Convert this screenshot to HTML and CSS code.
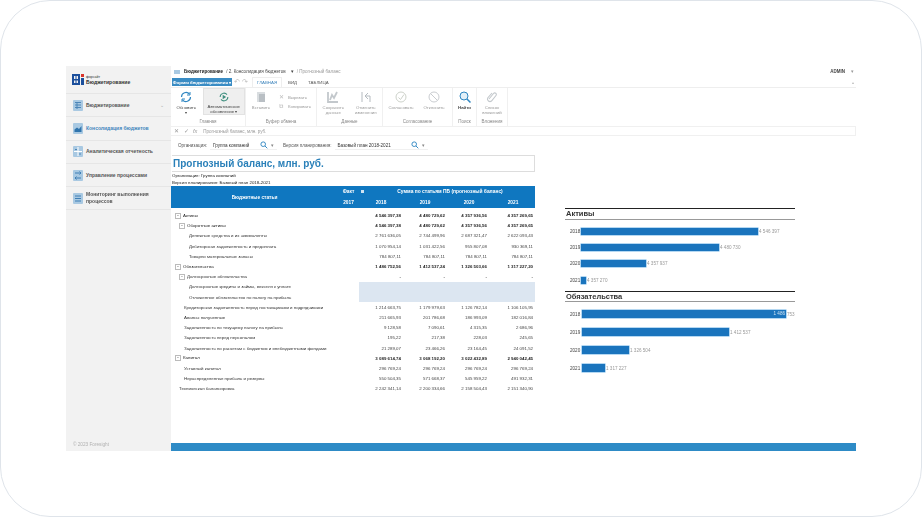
FILE: index.html
```html
<!DOCTYPE html>
<html lang="ru">

<head>
    <meta charset="UTF-8" />
    <title>Консолидация бюджетов</title>
    <link rel="stylesheet" href="styles.css">
</head>

<body>
    <div class="frame">
        <div class="app">
            <div class="sidebar">
                <div class="logo">
                    <svg width="13" height="13" viewBox="0 0 13 13">
                        <path d="M0 1h8v11H0zM2 3v3h1.500V3zM4.500 3v3H6V3zM2 7.500V10h1.500V7.500zM4.500 7.500V10H6V7.500z" fill="#1b4f9c" fill-rule="evenodd" />
                        <path d="M9 1h3v3H9z" fill="#d9342b" />
                        <path d="M9 5h3v7H9z" fill="#1b4f9c" />
                    </svg>
                    <div>
                        <div class="logo-small">форсайт</div>
                        <div class="logo-name">Бюджетирование</div>
                    </div>
                </div>
                <div class="nav">
                    <a class="nav-item">
                        <span class="nav-icon"><svg viewBox="0 0 10 11"><path d="M2 2.500h6M2 5h6M2 7.500h6M4 2v7" stroke="#4d86b8" stroke-width="1" fill="none" /></svg></span>
                        Бюджетирование
                        <span class="nav-arrow">⌄</span>
                    </a>
                    <a class="nav-item active">
                        <span class="nav-icon"><svg viewBox="0 0 10 11"><path d="M1.500 9V6.500L4 4.500l2 1.500 2.500-3V9z" fill="#2f74ad" /></svg></span>
                        Консолидация бюджетов
                    </a>
                    <a class="nav-item">
                        <span class="nav-icon"><svg viewBox="0 0 10 11"><path d="M1 5.500h8M5 1v9" stroke="#fff" stroke-width="1" /><path d="M2 3.500h2M6 8h2" stroke="#4d86b8" stroke-width="1" /></svg></span>
                        Аналитическая отчетность
                    </a>
                    <a class="nav-item">
                        <span class="nav-icon"><svg viewBox="0 0 10 11"><path d="M2 3h6M2 8h6M6.500 4.500L8 3 6.500 1.500M3.500 6.500L2 8l1.500 1.500" stroke="#3f7fb5" stroke-width="1" fill="none" /></svg></span>
                        Управление процессами
                    </a>
                    <a class="nav-item">
                        <span class="nav-icon"><svg viewBox="0 0 10 11"><path d="M2 3h6M2 5.500h6M2 8h6" stroke="#3f7fb5" stroke-width="1" /></svg></span>
                        <span>Мониторинг выполнения<br>процессов</span>
                    </a>
                </div>
                <div class="copyright">© 2023 Foresight</div>
            </div>

            <div class="main">
                <div class="crumbs">
                    <span class="crumb-icon"></span>
                    <b>Бюджетирование</b>
                    <span>/ 2. Консолидация бюджетов</span>
                    <span class="crumb-caret">▾</span>
                    <span class="crumb-last">/ Прогнозный баланс</span>
                    <span class="admin">ADMIN</span>
                    <span class="admin-caret">▾</span>
                </div>

                <div class="tabs">
                    <button class="forms-btn">Формы бюджетирования ▾</button>
                    <span class="undo">↶ ↷</span>
                    <span class="tab current">ГЛАВНАЯ</span>
                    <span class="tab">ВИД</span>
                    <span class="tab">ТАБЛИЦА</span>
                    <span class="tabs-end">▴</span>
                </div>

                <div class="ribbon">
                    <div class="group group-main">
                        <div class="tools">
                            <div class="tool tool-refresh">
                                <svg class="icon" viewBox="0 0 14 14"><path d="M2.500 7a4.500 4.500 0 0 1 8-2.800M11.500 7a4.500 4.500 0 0 1-8 2.800" fill="none" stroke="#2f86c1" stroke-width="1.200" /><path d="M11 2v3H8M3 12V9h3" fill="none" stroke="#2f86c1" stroke-width="1" /></svg>
                                <span>Обновить<br>▾</span>
                            </div>
                            <div class="tool tool-auto">
                                <svg class="icon" viewBox="0 0 14 14"><path d="M2.500 7a4.500 4.500 0 0 1 8-2.800M11.500 7a4.500 4.500 0 0 1-8 2.800" fill="none" stroke="#3f8f7f" stroke-width="1.200" /><path d="M5.500 4.500l4 2.500-4 2.500z" fill="#3f8f7f" /></svg>
                                <span>Автоматическое<br>обновление ▾</span>
                            </div>
                        </div>
                        <div class="group-name">Главная</div>
                    </div>
                    <div class="group group-clip">
                        <div class="tools">
                            <div class="tool tool-paste">
                                <svg class="icon" viewBox="0 0 14 14"><path d="M3 2h8v10H3z" fill="#d9dde0" /><path d="M5 4h6v8H5z" fill="#b9bfc4" /></svg>
                                <span>Вставить</span>
                            </div>
                            <div class="clip-list">
                                <div><i>✕</i>Вырезать</div>
                                <div><i>⧉</i>Копировать</div>
                            </div>
                        </div>
                        <div class="group-name">Буфер обмена</div>
                    </div>
                    <div class="group group-data">
                        <div class="tools">
                            <div class="tool tool-wide">
                                <svg class="icon" viewBox="0 0 14 14"><path d="M2 2v10h10M4 10l2-5 2 3 3-6" fill="none" stroke="#c3c8cc" stroke-width="1.800" /></svg>
                                <span>Сохранить<br>данные</span>
                            </div>
                            <div class="tool tool-wide">
                                <svg class="icon" viewBox="0 0 14 14"><path d="M3 2v10" stroke="#b5bbc0" stroke-width="1" /><path d="M6 6l3-3 0 0M6 6l3 3M6 6h5v6" fill="none" stroke="#b5bbc0" stroke-width="1" /></svg>
                                <span>Отменить<br>изменения</span>
                            </div>
                        </div>
                        <div class="group-name">Данные</div>
                    </div>
                    <div class="group group-agree">
                        <div class="tools">
                            <div class="tool tool-wide">
                                <svg class="icon" viewBox="0 0 14 14"><circle cx="7" cy="7" r="5" fill="none" stroke="#ccd1c9" stroke-width="1" /><path d="M4.500 7.500L6.500 9.500 10 4.500" fill="none" stroke="#ccd1c9" stroke-width="1" /></svg>
                                <span>Согласовать</span>
                            </div>
                            <div class="tool tool-wide">
                                <svg class="icon" viewBox="0 0 14 14"><circle cx="7" cy="7" r="5" fill="none" stroke="#c9ccd0" stroke-width="1" /><path d="M3.500 3.500l7 7" stroke="#c9ccd0" stroke-width="1" /></svg>
                                <span>Отклонить</span>
                            </div>
                        </div>
                        <div class="group-name">Согласование</div>
                    </div>
                    <div class="group group-find">
                        <div class="tools">
                            <div class="tool tool-find">
                                <svg class="icon" viewBox="0 0 14 14"><circle cx="6" cy="6" r="4" fill="#e3f0f8" stroke="#2f86c1" stroke-width="1" /><path d="M9 9l3.500 3.500" stroke="#2f86c1" stroke-width="1.500" /></svg>
                                <span>Найти</span>
                            </div>
                        </div>
                        <div class="group-name">Поиск</div>
                    </div>
                    <div class="group group-files">
                        <div class="tools">
                            <div class="tool">
                                <svg class="icon" viewBox="0 0 14 14"><path d="M4 9l4.500-5.500a1.600 1.600 0 0 1 2.500 2L6.500 11a2.500 2.500 0 0 1-3.800-3L7 3" fill="none" stroke="#c3c8cc" stroke-width="1.100" /></svg>
                                <span>Список<br>вложений</span>
                            </div>
                        </div>
                        <div class="group-name">Вложения</div>
                    </div>
                </div>

                <div class="formula">
                    <span class="formula-icons">✕ ✓ <i>fx</i></span>
                    <span>Прогнозный баланс, млн. руб.</span>
                </div>

                <div class="filters">
                    <label>Организация:</label>
                    <div class="picker picker-org">
                        <span>Группа компаний</span>
                        <svg class="picker-search" viewBox="0 0 8 8"><circle cx="3.200" cy="3.200" r="2.300" fill="none" stroke="#3a8cc4" stroke-width="1" /><path d="M5 5l2.300 2.300" stroke="#3a8cc4" stroke-width="1" /></svg>
                        <span class="picker-arrow">▾</span>
                    </div>
                    <label>Версия планирования:</label>
                    <div class="picker picker-ver">
                        <span>Базовый план 2018-2021</span>
                        <svg class="picker-search" viewBox="0 0 8 8"><circle cx="3.200" cy="3.200" r="2.300" fill="none" stroke="#3a8cc4" stroke-width="1" /><path d="M5 5l2.300 2.300" stroke="#3a8cc4" stroke-width="1" /></svg>
                        <span class="picker-arrow">▾</span>
                    </div>
                </div>

                <div class="content">
                    <div class="report">
                        <div class="report-title">Прогнозный баланс, млн. руб.</div>
                        <div class="report-note">Организация: Группа компаний</div>
                        <div class="report-note">Версия планирования: Базовый план 2018-2021</div>

                        <table class="grid">
                            <colgroup>
                                <col class="col-name">
                                <col class="col-fact">
                                <col class="col-num">
                                <col class="col-num">
                                <col class="col-num">
                                <col class="col-num">
                            </colgroup>
                            <thead>
                                <tr>
                                    <th rowspan="2" class="th-name">Бюджетные статьи</th>
                                    <th>Факт</th>
                                    <th colspan="4" class="th-sum"><span class="th-mark"></span>Сумма по статьям ПБ (прогнозный баланс)</th>
                                </tr>
                                <tr>
                                    <th>2017</th>
                                    <th>2018</th>
                                    <th>2019</th>
                                    <th>2020</th>
                                    <th>2021</th>
                                </tr>
                            </thead>
                            <tbody>
                                <tr class="bold">
                                    <td class="lvl0"><span class="tree">−</span><span class="plain">Активы</span></td><td></td>
                                    <td>4 546 397,38</td><td>4 480 729,62</td><td>4 357 936,56</td><td>4 357 269,65</td>
                                </tr>
                                <tr class="bold">
                                    <td class="lvl1"><span class="tree">−</span><span class="plain">Оборотные активы</span></td><td></td>
                                    <td>4 546 397,38</td><td>4 480 729,62</td><td>4 357 936,56</td><td>4 357 269,65</td>
                                </tr>
                                <tr>
                                    <td class="lvl2">Денежные средства и их эквиваленты</td><td></td>
                                    <td>2 761 636,05</td><td>2 744 499,96</td><td>2 687 321,47</td><td>2 622 093,43</td>
                                </tr>
                                <tr>
                                    <td class="lvl2">Дебиторская задолженность и предоплата</td><td></td>
                                    <td>1 070 954,14</td><td>1 031 422,56</td><td>955 807,08</td><td>930 369,11</td>
                                </tr>
                                <tr>
                                    <td class="lvl2">Товарно материальные запасы</td><td></td>
                                    <td>784 807,11</td><td>784 807,11</td><td>784 807,11</td><td>784 807,11</td>
                                </tr>
                                <tr class="bold">
                                    <td class="lvl0"><span class="tree">−</span><span class="plain">Обязательства</span></td><td></td>
                                    <td>1 486 752,56</td><td>1 412 537,24</td><td>1 326 503,66</td><td>1 317 227,20</td>
                                </tr>
                                <tr>
                                    <td class="lvl1"><span class="tree">−</span>Долгосрочные обязательства</td><td></td>
                                    <td>-</td><td>-</td><td>-</td><td>-</td>
                                </tr>
                                <tr class="empty">
                                    <td class="lvl2">Долгосрочные кредиты и займы, векселя к уплате</td><td></td>
                                    <td></td><td></td><td></td><td></td>
                                </tr>
                                <tr class="empty">
                                    <td class="lvl2">Отложенное обязательство по налогу на прибыль</td><td></td>
                                    <td></td><td></td><td></td><td></td>
                                </tr>
                                <tr>
                                    <td class="lvl3">Кредиторская задолженность перед поставщиками и подрядчиками</td><td></td>
                                    <td>1 214 663,75</td><td>1 179 979,63</td><td>1 126 782,14</td><td>1 106 105,95</td>
                                </tr>
                                <tr>
                                    <td class="lvl3">Авансы полученные</td><td></td>
                                    <td>211 665,93</td><td>201 786,68</td><td>186 993,09</td><td>182 016,84</td>
                                </tr>
                                <tr>
                                    <td class="lvl3">Задолженность по текущему налогу на прибыль</td><td></td>
                                    <td>9 128,58</td><td>7 090,61</td><td>4 315,35</td><td>2 686,96</td>
                                </tr>
                                <tr>
                                    <td class="lvl3">Задолженность перед персоналом</td><td></td>
                                    <td>195,22</td><td>217,38</td><td>228,03</td><td>245,65</td>
                                </tr>
                                <tr>
                                    <td class="lvl3">Задолженность по расчетам с бюджетом и внебюджетными фондами</td><td></td>
                                    <td>21 289,07</td><td>23 466,26</td><td>23 164,45</td><td>24 091,52</td>
                                </tr>
                                <tr class="bold">
                                    <td class="lvl0"><span class="tree">−</span><span class="plain">Капитал</span></td><td></td>
                                    <td>3 089 614,74</td><td>3 068 192,20</td><td>3 022 432,89</td><td>2 940 042,45</td>
                                </tr>
                                <tr>
                                    <td class="lvl3">Уставный капитал</td><td></td>
                                    <td>296 769,24</td><td>296 769,24</td><td>296 769,24</td><td>296 769,24</td>
                                </tr>
                                <tr>
                                    <td class="lvl3">Нераспределенная прибыль и резервы</td><td></td>
                                    <td>550 504,35</td><td>571 668,37</td><td>545 959,22</td><td>491 932,31</td>
                                </tr>
                                <tr>
                                    <td class="lvl1">Техническая балансировка</td><td></td>
                                    <td>2 242 341,14</td><td>2 200 334,66</td><td>2 158 504,43</td><td>2 151 340,90</td>
                                </tr>
                            </tbody>
                        </table>
                    </div>

                    <div class="charts">
                        <div class="chart chart-assets">
                            <h3>Активы</h3>
                            <div class="chart-body">
                                <div class="bar-row"><span>2018</span><div class="bar" style="width: 177px"></div><em>4 546 397</em></div>
                                <div class="bar-row"><span>2019</span><div class="bar" style="width: 138px"></div><em>4 480 730</em></div>
                                <div class="bar-row"><span>2020</span><div class="bar" style="width: 65px"></div><em>4 357 937</em></div>
                                <div class="bar-row"><span>2021</span><div class="bar" style="width: 5px"></div><em>4 357 270</em></div>
                            </div>
                        </div>
                        <div class="chart chart-debts">
                            <h3>Обязательства</h3>
                            <div class="chart-body">
                                <div class="bar-row"><span>2018</span><div class="bar" style="width: 204px"><b>1 486</b></div><em>753</em></div>
                                <div class="bar-row"><span>2019</span><div class="bar" style="width: 147px"></div><em>1 412 537</em></div>
                                <div class="bar-row"><span>2020</span><div class="bar" style="width: 47px"></div><em>1 326 504</em></div>
                                <div class="bar-row"><span>2021</span><div class="bar" style="width: 23px"></div><em>1 317 227</em></div>
                            </div>
                        </div>
                    </div>
                </div>

                <div class="bottom-bar"></div>
            </div>
        </div>
    </div>
</body>

</html>
```
FILE: styles.css
```css
html,
body {
    margin: 0;
    background: #fff;
}

body {
    font-family: 'Liberation Sans', Arial, sans-serif;
    color: #333;
}

.frame {
    width: 922px;
    height: 517px;
    box-sizing: border-box;
    border: 1px solid #dfe4ea;
    border-radius: 50px;
    padding: 65px 65px 0;
    overflow: hidden;
}

.app {
    width: 790px;
    height: 385px;
    display: flex;
    filter: blur(0.3px);
}

/* sidebar */
.sidebar {
    width: 105px;
    background-color: #f2f2f2;
    display: flex;
    flex-direction: column;
    flex-shrink: 0;
}

.logo {
    height: 27px;
    display: flex;
    align-items: center;
    gap: 1px;
    padding-left: 6px;
}

.logo-small {
    font-size: 3.500px;
    line-height: 4px;
}

.logo-name {
    font-size: 5.100px;
    font-weight: bold;
    line-height: 6px;
    color: #333;
}

.nav-item {
    height: 22.300px;
    display: flex;
    align-items: center;
    gap: 3px;
    padding-left: 7px;
    font-size: 5px;
    line-height: 7px;
    font-weight: bold;
    color: #555;
    border-top: 1px solid #e6e6e6;
}

.nav-item:last-child {
    border-bottom: 1px solid #e6e6e6;
}

.nav-item.active {
    color: #3f86bd;
}

.nav-icon {
    width: 10px;
    height: 11px;
    background-color: #a9c9e2;
    border-radius: 1px;
    flex-shrink: 0;
}

.nav-icon svg {
    display: block;
    width: 10px;
    height: 11px;
}

.nav-arrow {
    margin-left: auto;
    margin-right: 7px;
    color: #aaa;
    font-weight: normal;
    line-height: 4px;
}

.copyright {
    margin-top: auto;
    padding: 0 0 4px 7px;
    font-size: 4.700px;
    color: #b0b0b0;
}

/* main */
.main {
    flex: 1;
    min-width: 0;
    display: flex;
    flex-direction: column;
}

.crumbs {
    height: 11px;
    display: flex;
    align-items: center;
    gap: 3px;
    font-size: 4.500px;
    color: #444;
}

.crumbs b {
    color: #222;
}

.crumb-icon {
    width: 6px;
    height: 4px;
    margin-left: 3px;
    margin-right: 1px;
    background-color: #a9c9e2;
}

.crumb-caret {
    margin-left: 2px;
}

.crumb-last {
    color: #999;
}

.admin {
    margin-left: auto;
    font-weight: bold;
}

.admin-caret {
    margin-left: 3px;
    margin-right: 2px;
    color: #999;
}

.tabs {
    height: 10px;
    display: flex;
    align-items: center;
    font-size: 4.400px;
    color: #555;
}

.forms-btn {
    width: 60px;
    height: 8px;
    margin-left: 1px;
    padding: 0;
    border: none;
    font-family: inherit;
    font-size: 4.400px;
    font-weight: bold;
    white-space: nowrap;
    color: #fff;
    background-color: #3a8cc4;
}

.undo {
    width: 20px;
    padding-left: 2px;
    box-sizing: border-box;
    color: #bbb;
    font-size: 7px;
}

.tab {
    margin-right: 11px;
    line-height: 9px;
}

.tab.current {
    width: 22px;
    padding-left: 4px;
    padding-right: 2px;
    margin-right: 6px;
    color: #3f86bd;
    background: #fff;
    border: 1px solid #eee;
    border-bottom: none;
}

.tabs-end {
    margin-left: auto;
    margin-right: 2px;
    color: #bbb;
}

.ribbon {
    height: 39px;
    display: flex;
    border-top: 1px solid #eee;
    box-sizing: border-box;
}

.group {
    display: flex;
    flex-direction: column;
    border-right: 1px solid #f0f0f0;
    box-sizing: border-box;
}

.group-main {
    width: 75px;
}

.group-clip {
    width: 71px;
}

.group-data {
    width: 66px;
}

.group-agree {
    width: 70px;
}

.group-find {
    width: 24px;
}

.group-files {
    width: 31px;
}

.tools {
    flex: 1;
    display: flex;
    justify-content: center;
}

.group-name {
    height: 9px;
    line-height: 9px;
    font-size: 4.500px;
    color: #888;
    text-align: center;
}

.tool {
    width: 31px;
    padding-top: 2px;
    display: flex;
    flex-direction: column;
    align-items: center;
    font-size: 4.300px;
    line-height: 5px;
    text-align: center;
    color: #999;
}

.icon {
    width: 14px;
    height: 14px;
    margin-bottom: 1px;
}

.tool-refresh {
    color: #444;
}

.tool-auto {
    width: 43px;
    height: 27px;
    margin-left: 1px;
    box-sizing: border-box;
    color: #444;
    background-color: #efefef;
    border: 1px solid #e2e2e2;
}

.tool-paste {
    width: 20px;
}

.clip-list {
    padding-top: 5px;
    margin-left: 8px;
    font-size: 4.300px;
    color: #999;
    line-height: 8px;
}

.clip-list i {
    display: inline-block;
    width: 9px;
    font-style: normal;
    color: #bbb;
    font-size: 6px;
}

.tool-wide {
    width: 33px;
}

.tool-find {
    width: 24px;
    color: #444;
    font-weight: bold;
}

.formula {
    height: 10px;
    display: flex;
    align-items: center;
    gap: 6px;
    box-sizing: border-box;
    padding-left: 3px;
    font-size: 4.500px;
    color: #999;
    border: 1px solid #f0f0f0;
    border-left: none;
}

.formula-icons {
    font-size: 5.500px;
    word-spacing: 3px;
    color: #999;
}

.filters {
    height: 19px;
    display: flex;
    align-items: center;
    padding-left: 7px;
    font-size: 4.600px;
    color: #555;
}

.picker {
    height: 9px;
    display: flex;
    align-items: center;
    box-sizing: border-box;
    padding-left: 3px;
    margin-left: 3px;
    border-bottom: 1px solid #f0f0f0;
    color: #333;
}

.picker-org {
    width: 67px;
    margin-right: 6px;
}

.picker-ver {
    width: 93px;
}

.picker-search {
    width: 8px;
    height: 8px;
    margin-left: auto;
}

.picker-arrow {
    width: 9px;
    text-align: center;
    color: #888;
}

.content {
    flex: 1;
    display: flex;
}

.report {
    width: 364px;
}

.report-title {
    height: 17px;
    margin-left: 1px;
    box-sizing: border-box;
    padding-left: 1px;
    font-size: 10px;
    line-height: 15px;
    font-weight: bold;
    color: #2a80b9;
    border: 1px solid #ddd;
    border-left: none;
}

.report-note {
    font-size: 4.400px;
    line-height: 7px;
    color: #222;
    padding-left: 1px;
}

.grid {
    width: 364px;
    table-layout: fixed;
    border-collapse: collapse;
    font-size: 4.400px;
}

.col-name {
    width: 167px;
}

.col-fact {
    width: 21px;
}

.col-num {
    width: 44px;
}

.grid th {
    height: 11px;
    padding: 0;
    font-size: 4.800px;
    color: #fff;
    background-color: #0f77c0;
}

.th-sum {
    position: relative;
}

.grid .th-sum {
    font-size: 4.900px;
    padding-left: 6px;
}

.th-mark {
    position: absolute;
    left: 2px;
    top: 4px;
    width: 3px;
    height: 3px;
    background-color: #cfe3f2;
}

.grid td {
    height: 10.200px;
    padding: 0 2px 0 0;
    white-space: nowrap;
    text-align: right;
    color: #444;
}

.grid tbody tr:first-child td {
    padding-top: 2.500px;
}

.grid td:nth-child(5) {
    padding-right: 4px;
}

.grid td:first-child {
    text-align: left;
    color: #333;
}

.grid .bold td {
    color: #222;
    font-weight: bold;
}

.grid .bold td:first-child,
.grid .plain {
    font-weight: normal;
}

.grid .empty td:nth-child(n+3) {
    background-color: #dce6f1;
}

.tree {
    display: inline-block;
    width: 4px;
    height: 4px;
    margin-right: 2px;
    border: 1px solid #bbb;
    line-height: 3px;
    text-align: center;
    font-size: 4px;
    font-weight: normal;
}

.grid .lvl0 {
    padding-left: 4px;
}

.grid .lvl1 {
    padding-left: 8px;
}

.grid .lvl2 {
    padding-left: 18px;
}

.grid .lvl3 {
    padding-left: 13px;
}

/* charts on the right */
.charts {
    width: 230px;
    margin-left: 30px;
    padding-top: 53px;
}

.chart h3 {
    margin: 0;
    line-height: 9px;
    padding-left: 1px;
    font-size: 7.500px;
    color: #333;
    border-top: 1px solid #222;
    border-bottom: 1px solid #999;
}

.chart-assets h3 {
    height: 10px;
}

.chart-debts h3 {
    height: 9px;
}

.chart-assets {
    margin-bottom: 3px;
}

.bar-row {
    display: flex;
    align-items: center;
    font-size: 4.600px;
    color: #444;
}

.bar-row span {
    width: 16px;
    padding-left: 5px;
    box-sizing: border-box;
}

.chart-assets .bar-row {
    height: 16.300px;
}

.chart-assets .chart-body {
    padding-top: 3px;
}

.chart-debts .bar-row {
    height: 18px;
}

.chart-debts .chart-body {
    padding-top: 3px;
}

.chart-debts .bar {
    height: 8px;
    margin-left: 1px;
}

.bar {
    height: 7px;
    background-color: #1a74bd;
    box-shadow: 0 0 0 0.500px #6cb2e6;
    text-align: right;
    line-height: 8px;
}

.bar b {
    font-weight: normal;
    color: #cfe3f2;
    padding-right: 1px;
}

.bar-row em {
    margin-left: 1px;
    font-style: normal;
    color: #999;
}

.bottom-bar {
    height: 8px;
    background-color: #2e8bc6;
}
```
